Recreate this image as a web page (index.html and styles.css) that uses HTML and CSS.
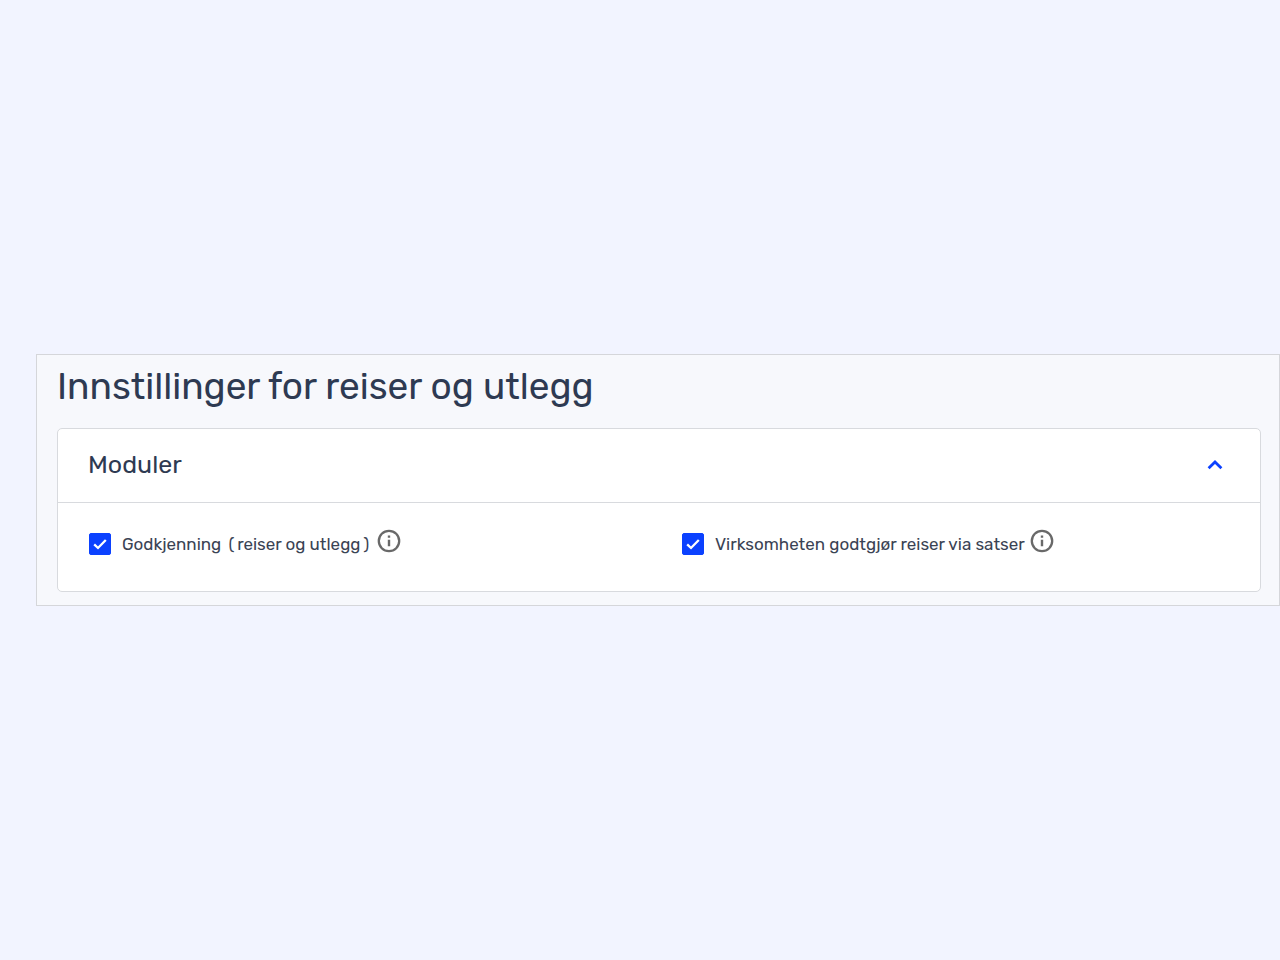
FILE: index.html
```html
<!DOCTYPE html>
<html lang="no">
<head>
    <meta charset="UTF-8">
    <meta name="viewport" content="width=device-width, initial-scale=1.0">
    <title>Innstillinger for reiser og utlegg</title>
    <link rel="stylesheet" href="styles.css">
</head>
<body>

    <main class="settings">
        <h1 class="settings-title">Innstillinger for reiser og utlegg</h1>

        <section class="card">
            <!-- Card header with collapse button -->
            <div class="card-header">
                <h2 class="card-title">Moduler</h2>
                <button class="toggle" type="button" aria-label="Skjul moduler" aria-expanded="true">
                    <svg width="16" height="10" viewBox="0 0 16 10"><path d="M1.6 8.2 8 2l6.4 6.2" fill="none" stroke="#0b41ff" stroke-width="2.8"/></svg>
                </button>
            </div>

            <div class="card-body">
                <div class="option">
                    <span class="check">
                        <input type="checkbox" id="approval" checked>
                        <svg class="check-mark" width="22" height="22" viewBox="0 0 22 22"><path d="M5.2 11.4 9 15 16.8 7" fill="none" stroke="#fff" stroke-width="2.3"/></svg>
                    </span>
                    <label for="approval">Godkjenning <span class="paren">(</span>reiser og utlegg<span class="paren">)</span></label>
                    <button class="info" type="button" aria-label="Mer om godkjenning">
                        <svg width="24" height="24" viewBox="0 0 24 24"><circle cx="12" cy="12" r="10.2" fill="none" stroke="#696969" stroke-width="2.3"/><path d="M10.8 6.4h2.4v2.4h-2.4zM10.8 10.8h2.4v6.4h-2.4z" fill="#696969"/></svg>
                    </button>
                </div>

                <div class="option">
                    <span class="check">
                        <input type="checkbox" id="rates" checked>
                        <svg class="check-mark" width="22" height="22" viewBox="0 0 22 22"><path d="M5.2 11.4 9 15 16.8 7" fill="none" stroke="#fff" stroke-width="2.3"/></svg>
                    </span>
                    <label for="rates">Virksomheten godtgjør reiser via satser</label>
                    <button class="info" type="button" aria-label="Mer om satser">
                        <svg width="24" height="24" viewBox="0 0 24 24"><circle cx="12" cy="12" r="10.2" fill="none" stroke="#696969" stroke-width="2.3"/><path d="M10.8 6.4h2.4v2.4h-2.4zM10.8 10.8h2.4v6.4h-2.4z" fill="#696969"/></svg>
                    </button>
                </div>
            </div>
        </section>
    </main>

</body>
</html>
```
FILE: styles.css
```css
* {
    box-sizing: border-box;
}

body {
    margin: 0;
    min-height: 100vh;
    display: flex;
    align-items: center;
    background-color: #f2f4ff;
    font-family: Rubik, Roboto, sans-serif;
    color: #2e3a52;
}

/* Settings panel */
.settings {
    flex: 1;
    margin-left: 36px;
    padding: 8px 18px 13px 20px;
    background-color: #f7f8fc;
    border: 1px solid #d5d6da;
}

.settings-title {
    margin: 0 0 18px;
    font-size: 37px;
    font-weight: 400;
    line-height: 47px;
}

/* Card */
.card {
    background-color: #fff;
    border: 1px solid #d8dade;
    border-radius: 5px;
}

.card-header {
    display: flex;
    align-items: center;
    justify-content: space-between;
    padding: 20px 37px 21px 30px;
    border-bottom: 1px solid #d8dade;
}

.card-title {
    margin: 0;
    font-size: 25px;
    font-weight: 400;
    line-height: 32px;
}

button {
    padding: 0;
    border: none;
    background: none;
    cursor: pointer;
}

button svg {
    display: block;
}

.card-body {
    display: grid;
    grid-template-columns: 1fr 1fr;
    gap: 46px;
    padding: 25px 31px 31px;
}

/* Checkbox rows */
.option {
    display: flex;
    align-items: center;
    color: #3a4354;
    font-size: 17px;
    line-height: 32px;
}

.option label {
    margin: 0 5px 0 11px;
}

.paren {
    margin: 0 3px;
}

.check {
    display: grid;
}

.check input {
    appearance: none;
    grid-area: 1 / 1;
    width: 22px;
    height: 22px;
    margin: 0;
    border: 1px solid #0b41ff;
    border-radius: 2px;
    background-color: #fff;
}

.check input:checked {
    background-color: #0b41ff;
}

.check-mark {
    grid-area: 1 / 1;
    pointer-events: none;
}

/* Info icon sits slightly above the label */
.info {
    padding-bottom: 6px;
}
```
